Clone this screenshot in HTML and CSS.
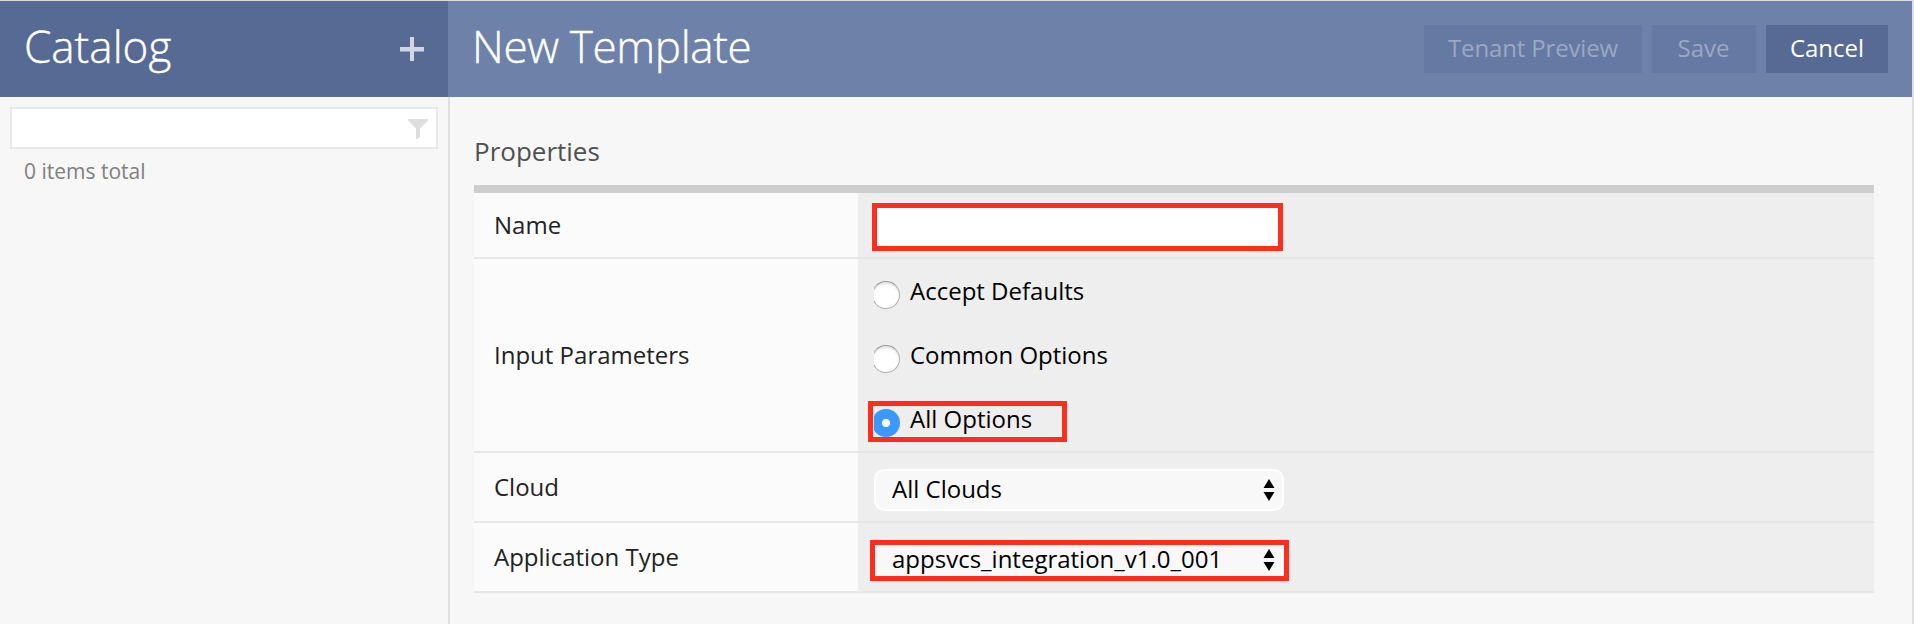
FILE: index.html
```html
<!DOCTYPE html>
<html lang="en">
<head>
<meta charset="utf-8">
<title>New Template</title>
<link rel="stylesheet" href="styles.css">
</head>
<body>
<div class="app">
  <aside class="sidebar">
    <header class="bar bar-side">
      <h1 class="title title-side">Catalog</h1>
      <svg class="plus" width="24" height="24" viewBox="0 0 24 24"><path d="M10 0h4v24h-4z"/><path d="M0 10h10v4H0zM14 10h10v4H14z"/><path class="plus-edge" d="M0 14h10v1H0zM14 14h10v1H14z"/></svg>
    </header>
    <div class="filter">
      <svg class="funnel" width="20" height="20" viewBox="0 0 20 20"><path d="M0 0h20v1.500L12 9.500v8L9.500 20H8V9.500L0 1.500z"/></svg>
    </div>
    <p class="count">0 items total</p>
  </aside>
  <main class="main">
    <header class="bar bar-main">
      <h2 class="title title-main">New Template</h2>
      <div class="actions">
        <button class="btn btn-preview" disabled>Tenant Preview</button>
        <button class="btn btn-save" disabled>Save</button>
        <button class="btn btn-cancel">Cancel</button>
      </div>
    </header>
    <section class="content">
      <h3 class="section-title">Properties</h3>
      <div class="table">
        <div class="row row-name">
          <div class="label">Name</div>
          <div class="value"><div class="name-field"></div></div>
        </div>
        <div class="row row-params">
          <div class="label">Input Parameters</div>
          <div class="value options">
            <div class="option"><span class="radio"><i class="dot"></i></span><span>Accept Defaults</span></div>
            <div class="option"><span class="radio"><i class="dot"></i></span><span>Common Options</span></div>
            <div class="option"><span class="radio"><i class="dot dot-on"></i></span><span>All Options</span><b class="mark mark-option"></b></div>
          </div>
        </div>
        <div class="row row-select">
          <div class="label">Cloud</div>
          <div class="value">
            <div class="select"><span class="select-text">All Clouds</span><svg class="arrows" width="12" height="22" viewBox="0 0 12 22"><path d="M6 0l5.500 9H.5zM.5 13h11L6 22z"/></svg></div>
          </div>
        </div>
        <div class="row row-select">
          <div class="label">Application Type</div>
          <div class="value">
            <div class="select"><span class="select-text">appsvcs_integration_v1.0_001</span><svg class="arrows" width="12" height="22" viewBox="0 0 12 22"><path d="M6 0l5.500 9H.5zM.5 13h11L6 22z"/></svg><b class="mark mark-select"></b></div>
          </div>
        </div>
      </div>
    </section>
  </main>
</div>
</body>
</html>
```
FILE: styles.css
```css
* { box-sizing: border-box; }
body {
  margin: 0;
  background: #f7f7f7;
  font-family: "Open Sans", sans-serif;
  font-size: 24px;
  color: #222;
}
.app {
  display: flex;
  height: 624px;
  border-top: 1px solid #dcdcdc;
  overflow: hidden;
}
.sidebar { width: 448px; }
.main {
  flex: 1;
  display: flex;
  flex-direction: column;
  border-right: 2px solid #dfdfdf;
}
.bar {
  display: flex;
  justify-content: space-between;
  height: 96px;
}
.bar-side { background: #566a94; padding: 0 24px; }
.bar-main { background: #6d81a9; padding: 24px 24px 0; }
.title {
  margin: 0;
  font-weight: 300;
  font-size: 44px;
  line-height: 90px;
  color: #fff;
  white-space: nowrap;
  -webkit-text-stroke: .4px #fff;
}
.title-main { margin-top: -24px; letter-spacing: -.35px; }
.plus { margin-top: 36px; fill: #d0d6e2; }
.plus-edge { opacity: .5; }
.filter {
  display: flex;
  justify-content: flex-end;
  align-items: center;
  margin: 10px 10px 0;
  width: 428px;
  height: 42px;
  padding-right: 8px;
  border: 2px solid #e8e8e8;
  background: #fff;
}
.funnel { fill: #dedede; margin-top: 2px; }
.count {
  margin: 7px 0 0 24px;
  font-size: 21px;
  line-height: 30px;
  color: #808080;
}
.actions { display: flex; gap: 10px; }
.btn {
  height: 48px;
  padding: 0 0 2px;
  border: 0;
  background: #566a94;
  color: #fff;
  font: 24px/46px "Open Sans", sans-serif;
  white-space: nowrap;
}
.btn:disabled { background: #6679a2; color: #9aa8c4; }
.btn-preview { width: 218px; letter-spacing: -.15px; }
.btn-save { width: 104px; padding-right: 1px; }
.btn-cancel { width: 122px; font-weight: 500; }
.content {
  flex: 1;
  padding: 36px 38px 0 24px;
  border-left: 2px solid #e0e0e0;
}
.section-title {
  margin: 0 0 16px;
  font-weight: 400;
  font-size: 26px;
  line-height: 36px;
  color: #505050;
}
.table { border-top: 8px solid #cecece; }
.row {
  display: flex;
  border-bottom: 2px solid #e6e6e6;
}
.row-name { height: 66px; }
.row-params { height: 194px; }
.row-select { height: 70px; }
.label {
  display: flex;
  align-items: center;
  width: 384px;
  padding: 0 0 1px 20px;
  background: #fbfbfb;
  white-space: nowrap;
}
.value {
  flex: 1;
  background: #eee;
  color: #000;
  padding: 16px 0 0 16px;
  white-space: nowrap;
}
.row-name .value { padding: 10px 0 0 14px; }
.name-field {
  width: 411px;
  height: 48px;
  border: 5px solid #ff2d1c;
  background: #fff;
}
.row .options { padding-top: 0; }
.option {
  position: relative;
  display: flex;
  gap: 10px;
  height: 64px;
  line-height: 64px;
}
.radio {
  display: flex;
  justify-content: flex-end;
  width: 26px;
  height: 28px;
  margin-top: 22px;
  overflow: hidden;
}
.dot {
  flex: none;
  width: 28px;
  height: 28px;
  border: 1px solid #b0b0b0;
  border-top-color: #999;
  border-radius: 50%;
  background: #fff;
  box-shadow: inset 0 2px 2px #e4e4e4;
}
.dot-on {
  border: 0;
  background: radial-gradient(circle at 14px 14px, #fff 3.700px, #3b99fc 4.500px);
  box-shadow: none;
}
.select {
  position: relative;
  display: flex;
  justify-content: space-between;
  align-items: center;
  width: 410px;
  height: 42px;
  padding: 0 7px 0 16px;
  border: 2px solid #fff;
  border-radius: 10px;
  background: #f8f8f8;
}
.select-text { padding-bottom: 3px; }
.arrows { fill: #000; }
.mark {
  position: absolute;
  border: 5px solid #ff2d1c;
}
.mark-option { left: -6px; top: 14px; width: 199px; height: 41px; }
.mark-select { left: -6px; top: -1px; width: 419px; height: 41px; }
```
